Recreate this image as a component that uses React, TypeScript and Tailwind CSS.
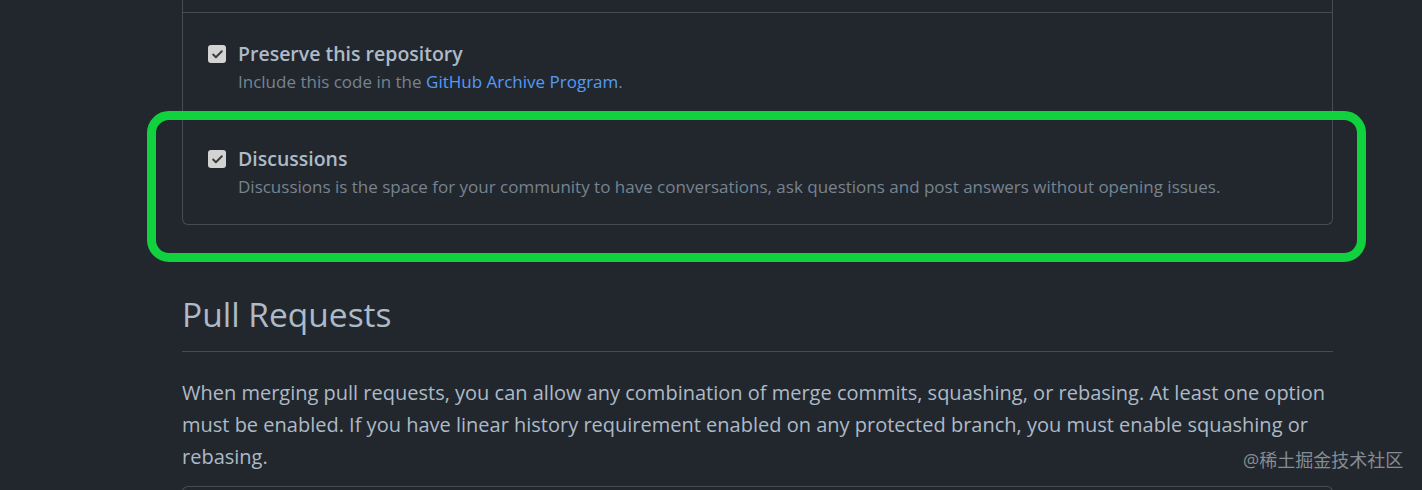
import { Check } from "lucide-react";

function CheckBox() {
  return (
    <span className="mt-[5px] flex h-[18px] w-[18px] shrink-0 items-center justify-center rounded-[3px] bg-[#d3d3d3]">
      <Check size={13} strokeWidth={3.5} className="text-[#3b3b3b]" />
    </span>
  );
}

function FeatureRow({ title, top, children }: { title: string; top: string; children: React.ReactNode }) {
  return (
    <div className={`flex gap-3 px-[25px] pb-[23px] ${top}`}>
      <CheckBox />
      <div>
        <div className="text-[19.5px] font-semibold leading-[28px] text-[#adbac7]">{title}</div>
        <div className="text-[17px] leading-[28px] text-[#768390]">{children}</div>
      </div>
    </div>
  );
}

export default function App() {
  return (
    <div
      className="relative h-[490px] w-[1422px] overflow-hidden bg-[#22272e]"
      style={{ fontFamily: '"Open Sans", "Noto Sans CJK SC", sans-serif' }}
    >
      <div className="ml-[182px] w-[1151px]">
        <div className="rounded-b-md border-x border-b border-[#444c56]">
          <div className="h-[13px] border-b border-[#444c56]" />
          <FeatureRow title="Preserve this repository" top="pt-[27px]">
            Include this code in the <span className="text-[#539bf5]">GitHub Archive Program</span>.
          </FeatureRow>
          <FeatureRow title="Discussions" top="pt-[26px]">
            Discussions is the space for your community to have conversations, ask questions and post answers without opening issues.
          </FeatureRow>
        </div>

        <h2 className="mt-[67px] border-b border-[#444c56] pb-[15px] text-[33.5px] leading-[44px] text-[#adbac7]">
          Pull Requests
        </h2>

        <p className="mt-[25px] text-[20px] leading-[32px] text-[#adbac7]">
          When merging pull requests, you can allow any combination of merge commits, squashing, or rebasing. At least one option
          must be enabled. If you have linear history requirement enabled on any protected branch, you must enable squashing or
          rebasing.
        </p>

        <div className="mt-[13px] h-[20px] rounded-t-md border-x border-t border-[#444c56]" />
      </div>

      {/* annotation */}
      <div className="pointer-events-none absolute left-[147px] top-[111px] h-[151px] w-[1219px] rounded-[22px] border-[9px] border-[#12d13f]" />

      <div className="absolute left-[1243px] top-[447px] text-[18px] text-[#868c93]">@稀土掘金技术社区</div>
    </div>
  );
}
